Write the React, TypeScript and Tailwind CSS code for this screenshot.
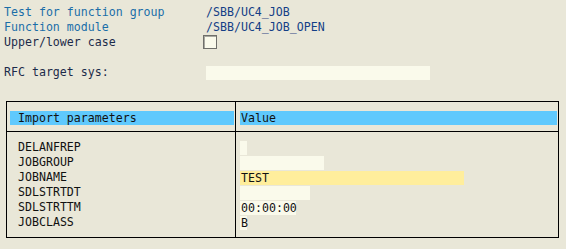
export default function App() {
  const rows = [
    { name: "DELANFREP", value: "", w: "w-[7px]", bg: "bg-[#fafaeb]" },
    { name: "JOBGROUP", value: "", w: "w-[84px]", bg: "bg-[#fafaeb]" },
    { name: "JOBNAME", value: "TEST", w: "w-[224px]", bg: "bg-[#ffee9c]" },
    { name: "SDLSTRTDT", value: "", w: "w-[70px]", bg: "bg-[#fafaeb]" },
    { name: "SDLSTRTTM", value: "00:00:00", w: "w-[56px]", bg: "bg-[#fafaeb]" },
    { name: "JOBCLASS", value: "B", w: "w-[7px]", bg: "bg-[#fafaeb]" },
  ];

  return (
    <div className="w-[566px] h-[249px] overflow-hidden bg-[#e9e7d8] font-['DejaVu_Sans_Mono','Liberation_Mono',monospace] text-[11.6px] leading-[15px]">
      {/* header fields */}
      <div className="pt-[5px] pl-[4px]">
        <div className="flex h-[15px]">
          <span className="w-[202px] text-[#1a6ea8]">Test for function group</span>
          <span className="text-[#143f86]">/SBB/UC4_JOB</span>
        </div>
        <div className="flex h-[15px]">
          <span className="w-[202px] text-[#1a6ea8]">Function module</span>
          <span className="text-[#143f86]">/SBB/UC4_JOB_OPEN</span>
        </div>
        <div className="flex h-[15px]">
          <span className="w-[199px] text-[#1c2b4a]">Upper/lower case</span>
          <span className="w-[14px] h-[14px] border border-[#6f6f6a] bg-[#fafaeb] shadow-[inset_1px_1px_0_#a8a8a0]"></span>
        </div>
        <div className="flex h-[15px] mt-[15px]">
          <span className="w-[202px] text-[#1c2b4a]">RFC target sys:</span>
          <span className="mt-[1px] w-[224px] h-[14px] bg-[#fafaeb]"></span>
        </div>
      </div>

      {/* parameter table */}
      <div className="mt-[21px] ml-[6px] w-[553px] border border-black text-[#111]">
        <div className="flex border-b border-black">
          <div className="w-[229px] border-r border-black pl-[3px] pt-[9px] pb-[6px]">
            <div className="w-[224px] h-[14px] bg-[#5fc9fd] pl-[8px] leading-[14px]">Import parameters</div>
          </div>
          <div className="flex-1 pl-[4px] pr-[1px] pt-[9px] pb-[6px]">
            <div className="h-[14px] bg-[#5fc9fd] pl-[1px] leading-[14px]">Value</div>
          </div>
        </div>
        <div className="flex">
          <div className="w-[229px] border-r border-black pl-[11px] pt-[8px] pb-[7px]">
            {rows.map((r) => (
              <div key={r.name} className="h-[15px]">{r.name}</div>
            ))}
          </div>
          <div className="flex-1 pl-[4px] pt-[8px] pb-[7px]">
            {rows.map((r) => (
              <div key={r.name} className="h-[15px] pt-[1px]">
                <div className={`${r.w} ${r.bg} h-[14px] leading-[14px] pl-[1px] whitespace-nowrap`}>{r.value}</div>
              </div>
            ))}
          </div>
        </div>
      </div>
    </div>
  );
}
